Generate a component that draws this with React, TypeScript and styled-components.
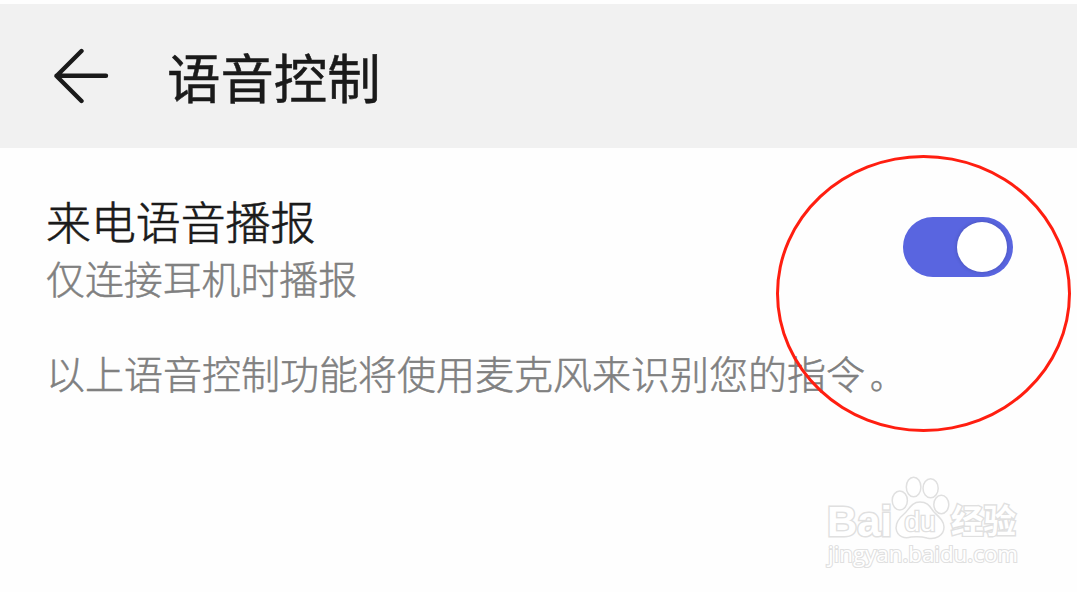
import React, { useState } from 'react'
import styled, { createGlobalStyle } from 'styled-components'

const App: React.FC = () => {
    const [checked, setChecked] = useState(true)

    return (
        <Layout>
            <GlobalStyle />
            <Header>
                <BackButton aria-label="返回">
                    <svg width="56" height="56" viewBox="0 0 56 56">
                        <path d="M28.5 3 L3.5 28 L28.5 53 M3.5 27.7 H53" />
                    </svg>
                </BackButton>
                <Title>语音控制</Title>
            </Header>
            <Content>
                <SettingRow>
                    <div>
                        <Label>来电语音播报</Label>
                        <SubLabel>仅连接耳机时播报</SubLabel>
                    </div>
                    <Toggle
                        role="switch"
                        aria-checked={checked}
                        $checked={checked}
                        onClick={() => setChecked(!checked)}
                    >
                        <Knob />
                    </Toggle>
                </SettingRow>
                <Notice>以上语音控制功能将使用麦克风来识别您的指令<Stop>。</Stop></Notice>
            </Content>
            <Highlight />
            <Watermark />
        </Layout>
    )
}

const Watermark: React.FC = () => (
    <Mark width="210" height="110" viewBox="820 470 210 110">
        <g>
            <ellipse cx="899.8" cy="500.5" rx="7.6" ry="9.5" />
            <ellipse cx="913.6" cy="487" rx="7.3" ry="9.8" />
            <ellipse cx="930.6" cy="488.3" rx="7.6" ry="9.5" />
            <ellipse cx="941.3" cy="504.5" rx="7.5" ry="9.3" />
            <path d="M920 502 C911 502 909 510 904 514 C898 519 896 523 896 528 C897 537 905 539 911 537 Q920 536 927 538 C935 540 944 536 944 527 C944 521 939 517 934 512 C930 507 928 502 920 502 Z" />
        </g>
        <Brand x="827" y="536" textLength="65" lengthAdjust="spacingAndGlyphs">Bai</Brand>
        <Du x="904.5" y="531" textLength="31" lengthAdjust="spacingAndGlyphs">du</Du>
        <Jingyan x="951" y="532.5" textLength="65" lengthAdjust="spacingAndGlyphs">经验</Jingyan>
        <Domain x="828" y="562" textLength="190" lengthAdjust="spacingAndGlyphs">jingyan.baidu.com</Domain>
    </Mark>
)

const GlobalStyle = createGlobalStyle`
    body {
        margin: 0;
        background: #fff;
        font-family: "Noto Sans CJK SC", sans-serif;
    }
`

const Layout = styled.div`
    position: relative;
    width: 100%;
    height: 592px;
    overflow: hidden;
    background: #fefefe;
`

const Header = styled.header`
    display: flex;
    align-items: center;
    height: 144px;
    margin-top: 4px;
    padding-left: 53px;
    box-sizing: border-box;
    background: #f1f1f1;
`

const BackButton = styled.button`
    width: 56px;
    height: 56px;
    padding: 0;
    border: none;
    background: transparent;

    svg {
        display: block;
        fill: none;
        stroke: #1a1a1a;
        stroke-width: 4.4;
        stroke-linecap: round;
        stroke-linejoin: round;
    }
`

const Title = styled.h1`
    margin: 0 0 0 58px;
    font-size: 53.4px;
    font-weight: 400;
    line-height: 72px;
    color: #1a1a1a;
    -webkit-text-stroke: 0.5px #1a1a1a;
`

const Content = styled.main`
    padding: 44px 64px 0 46px;
`

const SettingRow = styled.div`
    display: flex;
    justify-content: space-between;
    align-items: flex-start;
`

const Label = styled.div`
    font-size: 44.9px;
    font-weight: 300;
    line-height: 58px;
    color: #1a1a1a;
    -webkit-text-stroke: 0.6px #1a1a1a;
`

const SubLabel = styled.div`
    font-size: 38.9px;
    font-weight: 300;
    line-height: 54px;
    color: #808080;
    -webkit-text-stroke: 0.5px #808080;
`

const Toggle = styled.button<{ $checked: boolean }>`
    display: flex;
    justify-content: ${({ $checked }) => ($checked ? 'flex-end' : 'flex-start')};
    align-items: center;
    width: 110px;
    height: 60px;
    margin-top: 25px;
    padding: 0 6px;
    border: none;
    border-radius: 30px;
    background: ${({ $checked }) => ($checked ? '#5965e0' : '#d0d0d0')};
`

const Knob = styled.span`
    width: 50px;
    height: 50px;
    border-radius: 50%;
    background: #fff;
    box-shadow: 0 0 4px rgba(0, 0, 0, 0.2);
`

const Notice = styled.p`
    margin: 40px 0 0;
    font-size: 39px;
    font-weight: 300;
    line-height: 56px;
    white-space: nowrap;
    color: #808080;
    -webkit-text-stroke: 0.5px #808080;
`

const Stop = styled.span`
    margin-left: 5px;
    font-size: 33px;
    line-height: 1;
`

/* red ring drawn over the switch */
const Highlight = styled.div`
    position: absolute;
    left: 776px;
    top: 155px;
    width: 295px;
    height: 277px;
    box-sizing: border-box;
    border: 3px solid #ff1e10;
    border-radius: 50%;
    pointer-events: none;
`

const Mark = styled.svg`
    position: absolute;
    left: 820px;
    top: 470px;
    overflow: visible;
    fill: #fff;
    stroke: #e0e0e0;
    stroke-width: 1.5;
    paint-order: stroke;

    g {
        paint-order: normal;
    }
`

const Brand = styled.text`
    font: bold 43px "Liberation Sans", sans-serif;
    stroke-width: 3;
`

const Du = styled.text`
    font: 27px "Liberation Sans", sans-serif;
    stroke-width: 2.6;
`

const Jingyan = styled.text`
    font: 700 33px "Noto Sans CJK SC", sans-serif;
    stroke-width: 2.8;
`

const Domain = styled.text`
    font: 22.5px "Open Sans", sans-serif;
    stroke-width: 2.2;
`

export default App
